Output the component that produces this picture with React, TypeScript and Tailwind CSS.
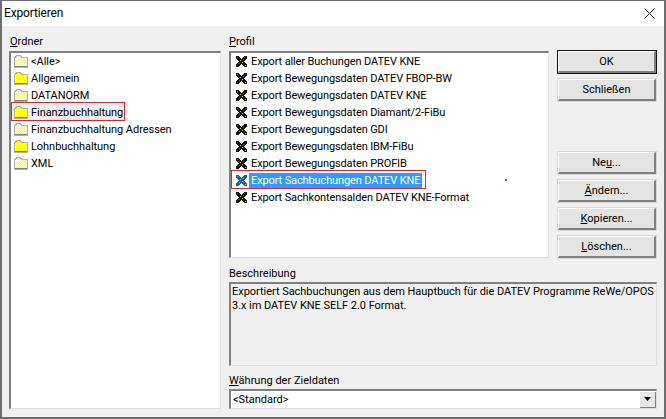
const folders = ["<Alle>", "Allgemein", "DATANORM", "Finanzbuchhaltung", "Finanzbuchhaltung Adressen", "Lohnbuchhaltung", "XML"];

const profiles = [
  "Export aller Buchungen DATEV KNE",
  "Export Bewegungsdaten DATEV FBOP-BW",
  "Export Bewegungsdaten DATEV KNE",
  "Export Bewegungsdaten Diamant/2-FiBu",
  "Export Bewegungsdaten GDI",
  "Export Bewegungsdaten IBM-FiBu",
  "Export Bewegungsdaten PROFIB",
  "Export Sachbuchungen DATEV KNE",
  "Export Sachkontensalden DATEV KNE-Format",
];

function FolderIcon({ pale }: { pale?: boolean }) {
  const id = pale ? "dither-pale" : "dither-full";
  return (
    <svg width="14" height="13" viewBox="0 0 14 13" className="shrink-0" shapeRendering="crispEdges">
      <defs>
        <pattern id={id} width="2" height="2" patternUnits="userSpaceOnUse">
          <rect width="2" height="2" fill={pale ? "#ffffc0" : "#ffff80"} />
          <rect width="1" height="1" fill={pale ? "#ffff40" : "#ffff00"} />
          <rect x="1" y="1" width="1" height="1" fill={pale ? "#ffff40" : "#ffff00"} />
        </pattern>
      </defs>
      <path d="M1 11V2H2V1H6V2H7V3H13V11Z" fill={`url(#${id})`} />
      <path d="M0.5 12V2.5H1.5V1.5H2.5V0.5H6.5V1.5H7.5V2.5H13.5V12Z" fill="none" stroke="#b0b0b0" />
      <path d="M1 12H13V11H1Z" fill="#808080" />
      <path d="M1 3H7V4H1Z" fill="#fffff0" />
    </svg>
  );
}

function ToolIcon({ active }: { active?: boolean }) {
  const dark = active ? "#1a5fb0" : "#141414";
  const tint = active ? "#30c8f0" : "#7a3c90";
  const spot = active ? "#60e0f0" : "#c8c830";
  return (
    <svg width="11" height="11" viewBox="0 0 11 11" className="shrink-0" shapeRendering="crispEdges">
      <path d="M0 0H3V1H4V2H5V3H6V2H7V1H8V0H11V3H10V4H9V5H8V6H9V7H10V8H11V11H8V10H7V9H6V8H5V9H4V10H3V11H0V8H1V7H2V6H3V5H2V4H1V3H0Z" fill={dark} />
      <rect x="4" y="4" width="1" height="1" fill={spot} />
      <rect x="6" y="6" width="1" height="1" fill={spot} />
      <rect x="7" y="3" width="1" height="1" fill={tint} />
      <rect x="3" y="7" width="1" height="1" fill={tint} />
      <rect x="1" y="1" width="1" height="1" fill={tint} />
      <rect x="9" y="9" width="1" height="1" fill={spot} />
    </svg>
  );
}

function Btn({ label, underline, rest, primary }: { label?: string; underline?: string; rest?: string; primary?: boolean }) {
  return (
    <div className={"h-[24px] w-[100px] shrink-0 border " + (primary ? "border-[#111]" : "border-[#d8d8d8]")}>
      <div className="flex h-full items-center justify-center border-t border-l border-r-2 border-b-2 border-t-white border-l-white border-r-[#808080] border-b-[#808080] bg-[#e4e4e4]">
        <span>
          {label}
          {underline ? <span className="underline">{underline}</span> : null}
          {rest}
        </span>
      </div>
    </div>
  );
}

export default function App() {
  return (
    <div
      className="relative flex h-[419px] w-[666px] flex-col overflow-hidden border-2 border-t border-[#6e6e6e] bg-[#f0f0f0] text-[11px] leading-[17px] text-black"
      style={{ fontFamily: 'Roboto, "Liberation Sans", Arial, sans-serif' }}
    >
      <div className="flex h-[25px] shrink-0 items-center justify-between bg-white pl-[2px] pr-[9px] text-[12px] tracking-[-0.15px]">
        <span>Exportieren</span>
        <svg width="11" height="11" viewBox="0 0 11 11">
          <path d="M0.5 0.5L10.5 10.5M10.5 0.5L0.5 10.5" stroke="#222" fill="none" />
        </svg>
      </div>

      <div className="flex min-h-0 flex-1 gap-[8px] px-[7px] pt-[7px] pb-[8px]">
        <div className="flex w-[212px] shrink-0 flex-col">
          <div className="h-[18px] shrink-0 pl-[1px]">
            <span className="underline">O</span>rdner
          </div>
          <div className="flex-1 border-2 border-r border-b border-[#808080] border-r-[#e0e0e0] border-b-[#e0e0e0] bg-white pl-[1px] tracking-[-0.05px]">
            {folders.map((f, i) => (
              <div key={f} className={"flex h-[17px] items-center gap-[3px] pl-[2px] " + (f === "Finanzbuchhaltung" ? "w-[116px] bg-[#f0f0f0]" : "")}>
                <FolderIcon pale={i % 2 === 0} />
                <span>{f}</span>
              </div>
            ))}
          </div>
        </div>

        <div className="flex min-w-0 flex-1 flex-col">
          <div className="flex h-[226px] shrink-0 gap-[8px]">
            <div className="flex min-w-0 flex-1 flex-col pb-[1px]">
              <div className="h-[18px] shrink-0">
                <span className="underline">P</span>rofil
              </div>
              <div className="flex-1 border-2 border-r border-b border-[#808080] border-r-[#e0e0e0] border-b-[#e0e0e0] bg-white pl-[5px] tracking-[-0.12px]">
                {profiles.map((p, i) => (
                  <div key={p} className="flex h-[17px] items-center gap-[2px]">
                    <ToolIcon active={i === 7} />
                    <span className={"h-[15px] px-[2px] leading-[15px] " + (i === 7 ? "bg-[#3399ff] text-white" : "")}>{p}</span>
                  </div>
                ))}
              </div>
            </div>
            <div className="flex w-[100px] shrink-0 flex-col pt-[17px]">
              <Btn label="OK" primary />
              <div className="mt-[4px]">
                <Btn label="Schließen" />
              </div>
              <div className="mt-[49px] flex flex-col gap-[4px]">
                <Btn label="Ne" underline="u" rest="..." />
                <Btn underline="Ä" rest="ndern..." />
                <Btn underline="K" rest="opieren..." />
                <Btn underline="L" rest="öschen..." />
              </div>
            </div>
          </div>

          <div className="mt-[6px] h-[17px] shrink-0">Beschreibung</div>
          <div className="h-[84px] shrink-0 whitespace-nowrap border-2 border-r border-b border-[#808080] border-r-[#e0e0e0] border-b-[#e0e0e0] px-[1px] pt-[1px] leading-[14px] tracking-[-0.04px]">
            Exportiert Sachbuchungen aus dem Hauptbuch für die DATEV Programme ReWe/OPOS
            <br />
            3.x im DATEV KNE SELF 2.0 Format.
          </div>

          <div className="mt-[6px] h-[17px] shrink-0">
            <span className="underline">W</span>ährung der Zieldaten
          </div>
          <div className="flex h-[20px] shrink-0 items-center justify-between border-2 border-r border-b border-[#808080] border-r-[#e0e0e0] border-b-[#e0e0e0] bg-white pl-[2px]">
            <span>{"<Standard>"}</span>
            <div className="flex h-[16px] w-[16px] items-center justify-center border-r border-b border-[#808080] bg-[#e6e6e6]">
              <svg width="7" height="4" viewBox="0 0 7 4">
                <path d="M0 0H7L3.5 4Z" fill="#000" />
              </svg>
            </div>
          </div>
        </div>
      </div>

      {/* annotation boxes drawn over the dialog */}
      <div className="absolute left-[9px] top-[101px] h-[19px] w-[114px] border border-[#e8202a]" />
      <div className="absolute left-[229px] top-[169px] h-[19px] w-[195px] border border-[#e8202a]" />
      <div className="absolute left-[503px] top-[178px] h-[2px] w-[2px] bg-[#d02040]" />
    </div>
  );
}
